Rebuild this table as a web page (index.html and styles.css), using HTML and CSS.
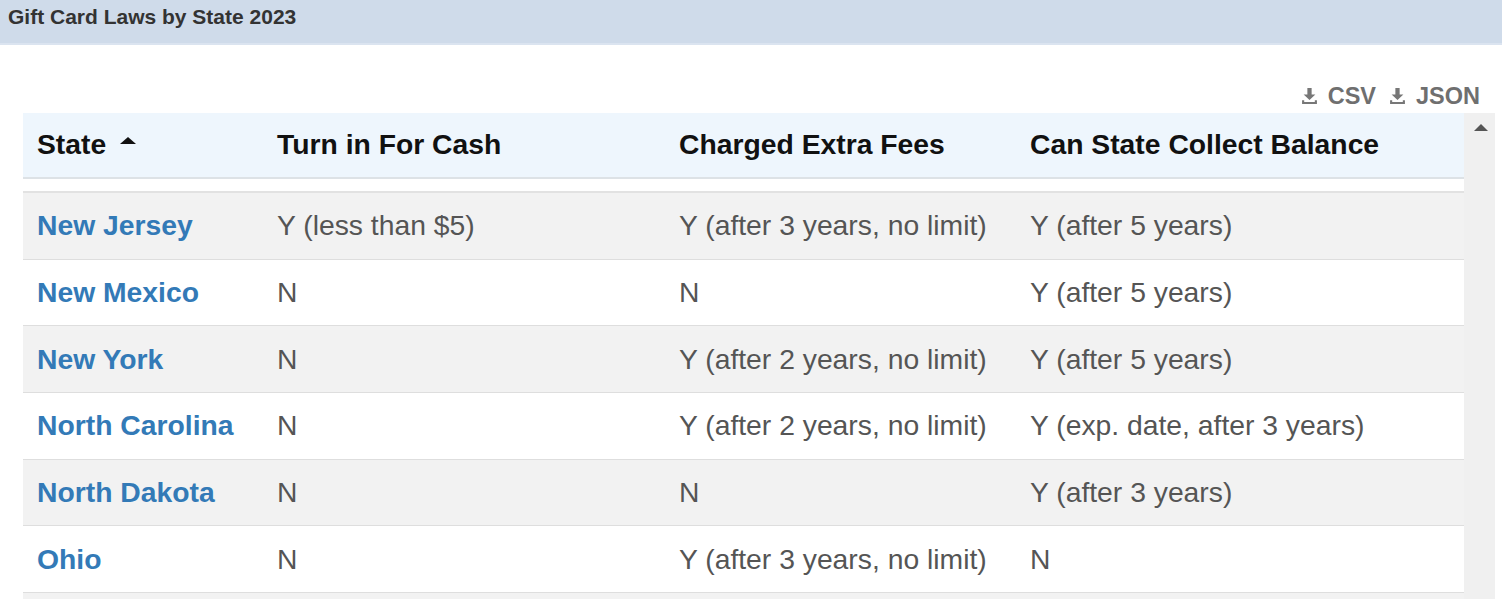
FILE: index.html
```
<!DOCTYPE html>
<html>
<head>
<meta charset="utf-8">
<link rel="stylesheet" href="styles.css">
</head>
<body>
<div class="titlebar">Gift Card Laws by State 2023</div>
<div class="tools">
  <a class="dl"><svg class="dlicon" viewBox="0 0 16 16" width="17" height="17"><path d="M6 1h4v6h3.5l-5.5 5.2-5.5-5.2h3.5z" fill="#777"/><path d="M1 12.5h2v1.5h10v-1.5h2v3.5h-14z" fill="#777"/></svg>CSV</a>
  <a class="dl"><svg class="dlicon" viewBox="0 0 16 16" width="17" height="17"><path d="M6 1h4v6h3.5l-5.5 5.2-5.5-5.2h3.5z" fill="#777"/><path d="M1 12.5h2v1.5h10v-1.5h2v3.5h-14z" fill="#777"/></svg>JSON</a>
</div>
<div class="tablewrap">
  <div class="tablemain">
    <table class="grid">
      <colgroup><col class="c1"><col class="c2"><col class="c3"><col class="c4"></colgroup>
      <thead>
        <tr><th>State <span class="sort"></span></th><th>Turn in For Cash</th><th>Charged Extra Fees</th><th>Can State Collect Balance</th></tr>
      </thead>
      <tbody>
        <tr class="spacer"><td colspan="4"></td></tr>
        <tr class="odd"><td><a>New Jersey</a></td><td>Y (less than $5)</td><td>Y (after 3 years, no limit)</td><td>Y (after 5 years)</td></tr>
        <tr><td><a>New Mexico</a></td><td>N</td><td>N</td><td>Y (after 5 years)</td></tr>
        <tr class="odd"><td><a>New York</a></td><td>N</td><td>Y (after 2 years, no limit)</td><td>Y (after 5 years)</td></tr>
        <tr><td><a>North Carolina</a></td><td>N</td><td>Y (after 2 years, no limit)</td><td>Y (exp. date, after 3 years)</td></tr>
        <tr class="odd"><td><a>North Dakota</a></td><td>N</td><td>N</td><td>Y (after 3 years)</td></tr>
        <tr><td><a>Ohio</a></td><td>N</td><td>Y (after 3 years, no limit)</td><td>N</td></tr>
        <tr class="odd"><td></td><td></td><td></td><td></td></tr>
      </tbody>
    </table>
  </div>
  <div class="scrollbar"><span class="uparrow"></span></div>
</div>
</body>
</html>
```
FILE: styles.css
```
html, body {
  margin: 0;
  padding: 0;
  background: #fff;
  font-family: "Liberation Sans", Arial, sans-serif;
  overflow: hidden;
  height: 599px;
}
.titlebar {
  height: 43px;
  background: #cfdbea;
  border-bottom: 2px solid #dbe4f0;
  box-sizing: content-box;
  font-weight: bold;
  font-size: 21px;
  line-height: 34px;
  color: #333;
  padding-left: 8px;
}
.tools {
  display: flex;
  justify-content: flex-end;
  gap: 13px;
  padding: 34px 22px 0 0;
  height: 34px;
}
.dl {
  display: flex;
  align-items: center;
  gap: 10px;
  font-weight: bold;
  font-size: 23.5px;
  color: #6f6f6f;
  line-height: 28px;
}
.dlicon { display: block; margin-top: -2px; }
.tablewrap {
  display: flex;
  margin-left: 23px;
  width: 1472px;
}
.tablemain {
  width: 1441px;
  height: 486px;
  overflow: hidden;
}
.grid {
  width: 1441px;
  table-layout: fixed;
  border-collapse: collapse;
  font-size: 28.3px;
}
.c1 { width: 240px; }
.c2 { width: 402px; }
.c3 { width: 351px; }
.c4 { width: 448px; }
.grid th {
  background: #eef6fd;
  height: 62px;
  padding: 0 14px 2px;
  text-align: left;
  color: #111;
  font-weight: bold;
  border-bottom: 2px solid #dde2e6;
  white-space: nowrap;
}
.sort {
  display: inline-block;
  width: 0;
  height: 0;
  border-left: 8px solid transparent;
  border-right: 8px solid transparent;
  border-bottom: 7px solid #111;
  vertical-align: middle;
  margin-left: 6px;
  position: relative;
  top: -6px;
}
.grid td {
  height: 65.67px;
  padding: 0 14px;
  color: #555;
  border-bottom: 1px solid #dedede;
  white-space: nowrap;
}
.grid tr.spacer td {
  height: 12px;
  padding: 0;
  border-bottom: 2px solid #e2e2e2;
  background: #fff;
}
.grid tr.odd td { background: #f2f2f2; }
.grid a {
  color: #337ab7;
  font-weight: bold;
  text-decoration: none;
}
.scrollbar {
  width: 31px;
  height: 486px;
  background: #f0f0f0;
  position: relative;
}
.uparrow {
  position: absolute;
  left: 10px;
  top: 11px;
  width: 0;
  height: 0;
  border-left: 7px solid transparent;
  border-right: 7px solid transparent;
  border-bottom: 7px solid #555;
}
```
